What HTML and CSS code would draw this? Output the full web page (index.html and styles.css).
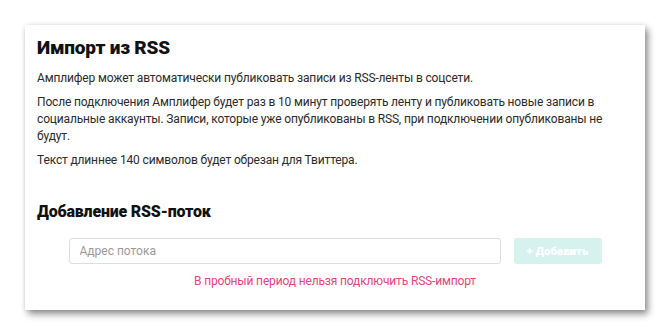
FILE: index.html
```html
<!DOCTYPE html>
<html lang="ru">
<head>
  <meta charset="UTF-8" />
  <title>Импорт из RSS</title>
  <link rel="stylesheet" href="styles.css">
</head>
<body>
  <div class="card">
    <h2>Импорт из RSS</h2>
    <p>Амплифер может автоматически публиковать записи из RSS-ленты в соцсети.</p>
    <p>После подключения Амплифер будет раз в 10 минут проверять ленту и публиковать новые записи в социальные аккаунты. Записи, которые уже опубликованы в RSS, при подключении опубликованы не будут.</p>
    <p>Текст длиннее 140 символов будет обрезан для Твиттера.</p>

    <h3>Добавление RSS-поток</h3>
    <form class="feed-form">
      <input type="text" placeholder="Адрес потока" />
      <button type="button" disabled>+ Добавить</button>
    </form>
    <div class="error">В пробный период нельзя подключить RSS-импорт</div>
  </div>
</body>
</html>
```

FILE: styles.css
```css
body {
  font-family: Roboto, "Liberation Sans", sans-serif;
  background: #fff;
  color: #2a2a2a;
  margin: 0;
  padding: 25px;
}

.card {
  width: 596px;
  height: 261px;
  padding: 12px;
  background: #fff;
  box-shadow: 3px 4px 7px rgba(0, 0, 0, 0.45), 0 0 4px rgba(0, 0, 0, 0.08);
}

.card h2 {
  font-size: 19px;
  line-height: 22px;
  letter-spacing: -0.2px;
  font-weight: 900;
  color: #111;
  margin: 0 0 10.5px;
}

.card p {
  font-size: 12px;
  letter-spacing: -0.15px;
  line-height: 17px;
  margin: 0 0 7px;
}

.card h3 {
  font-size: 16px;
  line-height: 20px;
  letter-spacing: -0.2px;
  font-weight: 900;
  color: #111;
  margin: 33.5px 0 16px;
}

.feed-form {
  display: flex;
  justify-content: center;
  gap: 13px;
}

.feed-form input {
  width: 432px;
  height: 26px;
  box-sizing: border-box;
  border: 1px solid #ddd;
  border-radius: 3px;
  padding: 0 10px;
  font-family: inherit;
  font-size: 12px;
}

.feed-form input::placeholder {
  color: #999;
}

.feed-form button {
  width: 88px;
  height: 26px;
  border: none;
  border-radius: 3px;
  background: #d6f2ee;
  color: #fff;
  font-family: inherit;
  font-weight: 900;
  font-size: 11.5px;
}

.error {
  text-align: center;
  color: #e4457c;
  font-size: 12px;
  letter-spacing: -0.15px;
  line-height: 16px;
  margin-top: 9px;
}
```
